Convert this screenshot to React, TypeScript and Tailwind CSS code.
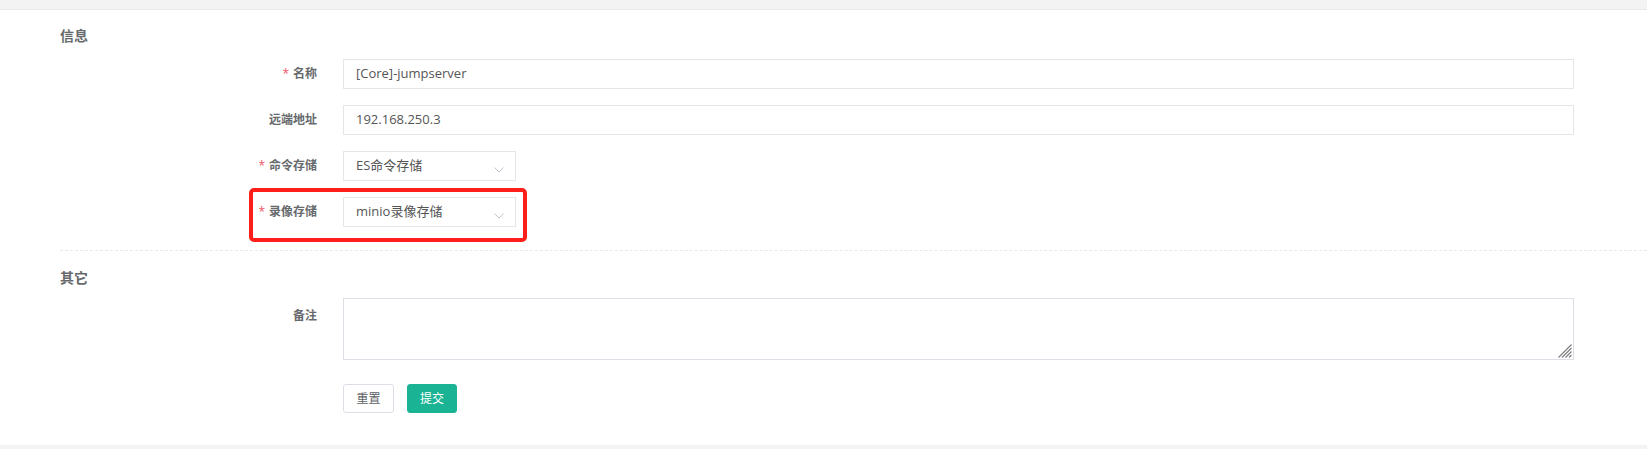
import React from "react";

const font = { fontFamily: '"Open Sans", "Noto Sans CJK SC", sans-serif' };

function Label({ text, required }: { text: string; required?: boolean }) {
  return (
    <div className="w-[257px] shrink-0 text-right text-[12px] font-bold leading-[16px] text-[#676a6c]">
      {required && <span className="mr-[4px] font-normal text-[#ed5565]">*</span>}
      {text}
    </div>
  );
}

function Chevron() {
  return (
    <svg width="10" height="6" viewBox="0 0 10 6" className="absolute right-[11px] top-[15px]">
      <path d="M0.5 0.5 L5 5 L9.5 0.5" fill="none" stroke="#c0c4cc" strokeWidth="1" />
    </svg>
  );
}

function TextRow({ label, value, required }: { label: string; value: string; required?: boolean }) {
  return (
    <div className="flex h-[30px] items-center">
      <Label text={label} required={required} />
      <div className="ml-[26px] flex h-[30px] w-[1231px] items-center border border-[#e5e6e7] bg-white pl-[12px] text-[13px] text-[#555]">
        {value}
      </div>
    </div>
  );
}

function SelectRow({ label, value, children }: { label: string; value: string; children?: React.ReactNode }) {
  return (
    <div className="relative flex h-[30px] items-center">
      <Label text={label} required />
      <div className="relative ml-[26px] flex h-[30px] w-[173px] items-center border border-[#e5e6e7] bg-white pl-[12px] text-[13px] text-[#555]">
        {value}
        <Chevron />
      </div>
      {children}
    </div>
  );
}

function ResizeGrip() {
  return (
    <svg width="14" height="14" viewBox="0 0 14 14" className="pointer-events-none absolute bottom-[2px] right-[2px]">
      <g stroke="#7a7a7a" strokeWidth="1.1">
        <path d="M13.5 0.5 L0.5 13.5" />
        <path d="M13.5 4 L4 13.5" />
        <path d="M13.5 7.5 L7.5 13.5" />
        <path d="M13.5 11 L11 13.5" />
      </g>
    </svg>
  );
}

export default function App() {
  return (
    <div className="h-[449px] w-[1647px] bg-[#f3f3f4] pt-[9px]" style={font}>
      <div className="border-t border-[#e7eaec] bg-white pb-[32px] pl-[60px] pt-[16px]">
        <div className="h-[20px] text-[14px] font-bold leading-[20px] text-[#676a6c]">信息</div>
        <div className="mt-[13px] flex flex-col gap-[16px]">
          <TextRow label="名称" value="[Core]-jumpserver" required />
          <TextRow label="远端地址" value="192.168.250.3" />
          <SelectRow label="命令存储" value="ES命令存储" />
          <SelectRow label="录像存储" value="minio录像存储">
            <div className="pointer-events-none absolute left-[189px] top-[-9px] h-[54px] w-[278px] rounded-[5px] border-[4px] border-[#ff1f1a]" />
          </SelectRow>
        </div>
        <div className="mt-[23px] border-t border-dashed border-[#e7eaec]" />
        <div className="mt-[17px] h-[20px] text-[14px] font-bold leading-[20px] text-[#676a6c]">其它</div>
        <div className="mt-[10px] flex items-start">
          <div className="pt-[10px]">
            <Label text="备注" />
          </div>
          <div className="relative ml-[26px]">
            <textarea
              className="block h-[62px] w-[1231px] resize-none border border-[#dcdfe6] bg-white px-[12px] py-[6px] text-[13px] text-[#555] outline-none"
              defaultValue=""
            />
            <ResizeGrip />
          </div>
        </div>
        <div className="mt-[24px] flex pl-[283px]">
          <button className="h-[29px] w-[51px] rounded-[3px] border border-[#dcdfe6] bg-white text-[12px] text-[#606266]">
            重置
          </button>
          <button className="ml-[13px] h-[29px] w-[50px] rounded-[3px] border border-[#1ab394] bg-[#1ab394] text-[12px] text-white">
            提交
          </button>
        </div>
      </div>
    </div>
  );
}
